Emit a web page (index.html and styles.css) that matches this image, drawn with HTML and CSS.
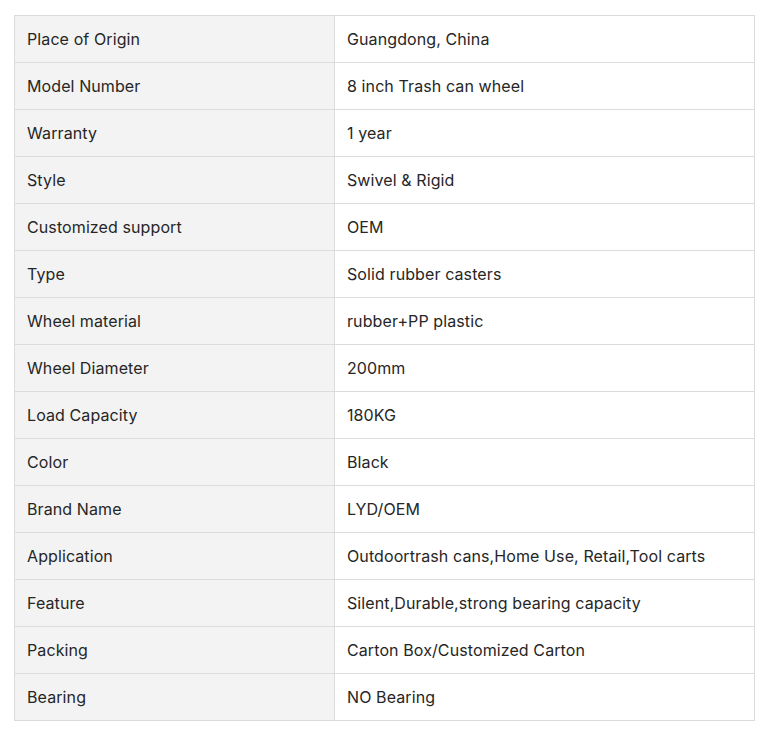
FILE: index.html
```html
<!DOCTYPE html>
<html>
<head>
<meta charset="utf-8">
<link rel="stylesheet" href="styles.css">
</head>
<body>
<table class="spec">
<tbody>
<tr><td class="k">Place of Origin</td><td class="v">Guangdong, China</td></tr>
<tr><td class="k">Model Number</td><td class="v">8 inch Trash can wheel</td></tr>
<tr><td class="k">Warranty</td><td class="v">1 year</td></tr>
<tr><td class="k">Style</td><td class="v">Swivel &amp; Rigid</td></tr>
<tr><td class="k">Customized support</td><td class="v">OEM</td></tr>
<tr><td class="k">Type</td><td class="v">Solid rubber casters</td></tr>
<tr><td class="k">Wheel material</td><td class="v">rubber+PP plastic</td></tr>
<tr><td class="k">Wheel Diameter</td><td class="v">200mm</td></tr>
<tr><td class="k">Load Capacity</td><td class="v">180KG</td></tr>
<tr><td class="k">Color</td><td class="v">Black</td></tr>
<tr><td class="k">Brand Name</td><td class="v">LYD/OEM</td></tr>
<tr><td class="k">Application</td><td class="v">Outdoortrash cans,Home Use, Retail,Tool carts</td></tr>
<tr><td class="k">Feature</td><td class="v">Silent,Durable,strong bearing capacity</td></tr>
<tr><td class="k">Packing</td><td class="v">Carton Box/Customized Carton</td></tr>
<tr><td class="k">Bearing</td><td class="v">NO Bearing</td></tr>
</tbody>
</table>
</body>
</html>
```
FILE: styles.css
```css
html, body {
  margin: 0;
  background: #fff;
}
body {
  padding: 15px 14px;
  font-family: Inter, "Noto Sans", sans-serif;
  font-size: 16px;
  color: #262626;
  letter-spacing: 0.1px;
}
.spec {
  border-collapse: collapse;
  width: 741px;
  table-layout: fixed;
}
.spec td {
  border: 1px solid #dcdcdc;
  height: 47px;
  padding: 0 12px;
  box-sizing: border-box;
  vertical-align: middle;
  line-height: 20px;
}
.spec .k {
  width: 320px;
  background: #f3f3f3;
}
.spec .v {
  background: #fff;
}
```
